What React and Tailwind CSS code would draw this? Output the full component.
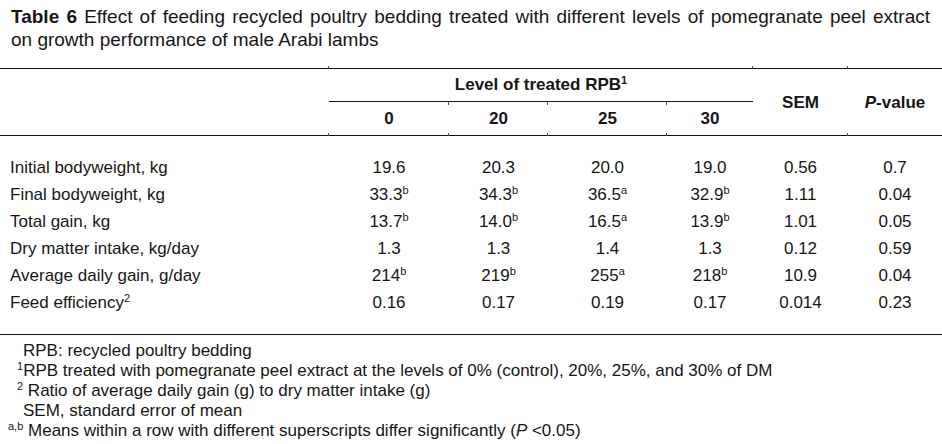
// Table 6 – growth performance of Arabi lambs
import React from "react";

const cols = "grid grid-cols-[329px_120px_99px_119px_86px_95px_94px]";

const rows = [
  { label: "Initial bodyweight, kg", vals: [["19.6"], ["20.3"], ["20.0"], ["19.0"]], sem: "0.56", p: "0.7" },
  { label: "Final bodyweight, kg", vals: [["33.3", "b"], ["34.3", "b"], ["36.5", "a"], ["32.9", "b"]], sem: "1.11", p: "0.04" },
  { label: "Total gain, kg", vals: [["13.7", "b"], ["14.0", "b"], ["16.5", "a"], ["13.9", "b"]], sem: "1.01", p: "0.05" },
  { label: "Dry matter intake, kg/day", vals: [["1.3"], ["1.3"], ["1.4"], ["1.3"]], sem: "0.12", p: "0.59" },
  { label: "Average daily gain, g/day", vals: [["214", "b"], ["219", "b"], ["255", "a"], ["218", "b"]], sem: "10.9", p: "0.04" },
  { label: "Feed efficiency", sup: "2", vals: [["0.16"], ["0.17"], ["0.19"], ["0.17"]], sem: "0.014", p: "0.23" },
];

function Sup({ children }) {
  return <span className="relative top-[-6px] align-baseline text-[11px] leading-none">{children}</span>;
}

// little cell-border stubs that poke out of the rules
function Tick({ side = "left", pos = "top" }) {
  const x = side === "left" ? "left-0" : "right-0";
  const y = pos === "top" ? "top-[-3px]" : pos === "below" ? "bottom-[-4px]" : "bottom-[-1px]";
  return <span className={`absolute ${x} ${y} h-[3px] w-px bg-[#555]`} />;
}

export default function App() {
  return (
    <div className="w-[942px] h-[444px] overflow-hidden bg-white text-[#161616] font-['Liberation_Sans',Arial,sans-serif]">
      <div className="pl-[11px] pt-[5px] text-[19px] leading-[23px]">
        <div className="w-[919px] text-justify [text-align-last:justify]">
          <b>Table 6</b> Effect of feeding recycled poultry bedding treated with different levels of pomegranate peel extract
        </div>
        <div>on growth performance of male Arabi lambs</div>
      </div>

      {/* header */}
      <div className={`${cols} mt-[17px] border-t border-b border-[#111] text-[17px] font-bold`}>
        <div className="relative row-span-2">
          <Tick side="right" pos="top" />
          <Tick side="right" pos="bottom" />
        </div>
        <div className="relative col-span-4 h-[33px] flex items-center justify-center border-b border-[#111]">
          <span>
            Level of treated RPB<Sup>1</Sup>
          </span>
          <Tick side="right" pos="top" />
        </div>
        <div className="relative row-span-2 flex items-center justify-center pt-[2px]">
          SEM
          <Tick side="right" pos="top" />
          <Tick side="right" pos="bottom" />
        </div>
        <div className="row-span-2 flex items-center justify-center pt-[2px]">
          <span>
            <i>P</i>-value
          </span>
        </div>
        {["0", "20", "25", "30"].map((h, i) => (
          <div key={h} className="relative h-[33px] flex items-center justify-center">
            {h}
            {i < 3 && <Tick side="right" pos="below-top" />}
            {i < 3 && <span className="absolute right-0 top-0 h-[3px] w-px bg-[#555]" />}
            {i < 3 && <Tick side="right" pos="bottom" />}
          </div>
        ))}
      </div>

      {/* body */}
      <div className="border-b border-[#111] py-[18px] text-[17px]">
        {rows.map((r) => (
          <div key={r.label} className={`${cols} h-[27px] items-center`}>
            <div className="pl-[10px]">
              {r.label}
              {r.sup && <Sup>{r.sup}</Sup>}
            </div>
            {r.vals.map(([v, s], i) => (
              <div key={i} className="text-center">
                {v}
                {s && <Sup>{s}</Sup>}
              </div>
            ))}
            <div className="text-center">{r.sem}</div>
            <div className="text-center">{r.p}</div>
          </div>
        ))}
      </div>

      {/* footnotes */}
      <div className="pt-[6px] text-[17px] leading-[20px]">
        <div className="pl-[23px]">RPB: recycled poultry bedding</div>
        <div className="pl-[17px]">
          <Sup>1</Sup>RPB treated with pomegranate peel extract at the levels of 0% (control), 20%, 25%, and 30% of DM
        </div>
        <div className="pl-[17px]">
          <Sup>2</Sup> Ratio of average daily gain (g) to dry matter intake (g)
        </div>
        <div className="pl-[23px]">SEM, standard error of mean</div>
        <div className="pl-[8px]">
          <Sup>a,b</Sup> Means within a row with different superscripts differ significantly (<i>P</i> &lt;0.05)
        </div>
      </div>
    </div>
  );
}
